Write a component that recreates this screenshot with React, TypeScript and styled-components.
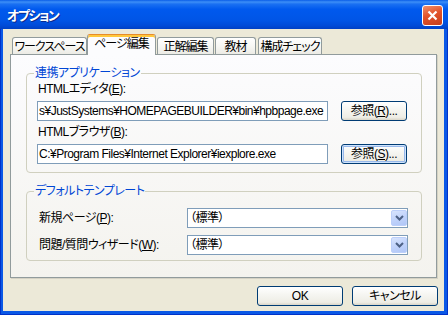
import React from 'react';
import styled, { createGlobalStyle, css } from 'styled-components';

const GlobalStyle = createGlobalStyle`
  html, body {
    margin: 0;
    padding: 0;
    background: #fff;
  }
  body {
    font-family: "Liberation Sans", "Noto Sans CJK JP", sans-serif;
    font-size: 12px;
    font-feature-settings: "palt";
    letter-spacing: -0.5px;
    color: #000;
  }
`;

const Window = styled.div`
  width: 448px;
  height: 315px;
  display: flex;
  flex-direction: column;
  background: #0a58e6;
  box-shadow: inset 1px 0 #0032c8, inset -1px 0 #0032c8, inset 0 -1px #0032c8;
`;

const TitleBar = styled.div`
  height: 29px;
  flex-shrink: 0;
  display: flex;
  align-items: center;
  justify-content: space-between;
  padding: 1px 5px 0 7px;
  box-sizing: border-box;
  background: linear-gradient(
    180deg,
    #0a5de8 0%,
    #3d8ff7 7%,
    #1a70f2 14%,
    #0059ee 32%,
    #0055e6 70%,
    #004bd8 88%,
    #0040c4 100%
  );
`;

const Title = styled.span`
  color: #fff;
  font-weight: bold;
  font-size: 13px;
  line-height: 15px;
  letter-spacing: -1.5px;
  text-shadow: 1px 1px 0 #0c2a8c;
`;

const CloseButton = styled.div`
  width: 21px;
  height: 21px;
  box-sizing: border-box;
  border: 1px solid #fff;
  border-radius: 3px;
  background: linear-gradient(160deg, #f0906c 0%, #e2532b 45%, #c63d1a 100%);
  display: flex;
  align-items: center;
  justify-content: center;
`;

const Client = styled.div`
  flex: 1;
  margin: 0 4px 4px 3px;
  background: #ece9d8;
  display: flex;
  flex-direction: column;
  padding: 5px 6px 0 7px;
`;

const TabRow = styled.div`
  height: 20px;
  display: flex;
  align-items: flex-end;
  padding-left: 2px;
  position: relative;
  z-index: 1;
`;

const Tab = styled.div<{ $active?: boolean; $width: number; $gap: number }>`
  width: ${(p) => p.$width}px;
  margin-left: ${(p) => p.$gap}px;
  box-sizing: border-box;
  border: 1px solid #919b9c;
  border-bottom: none;
  border-radius: 3px 3px 0 0;
  display: flex;
  justify-content: center;
  line-height: 14px;
  letter-spacing: -1px;
  white-space: nowrap;
  ${(p) =>
    p.$active
      ? css`
          height: 21px;
          margin-bottom: -1px;
          padding-top: 2px;
          border-top-color: #e68b2c;
          background: #fcfcfe;
          box-shadow: inset 0 2px 0 #ffc83c;
        `
      : css`
          height: 17px;
          padding-top: 2px;
          background: linear-gradient(180deg, #ffffff 0%, #f7f7f4 50%, #ecebe5 100%);
        `}
`;

const Panel = styled.div`
  height: 224px;
  box-sizing: border-box;
  margin-right: 1px;
  border: 1px solid #919b9c;
  background: linear-gradient(180deg, #fcfcfe 0%, #f4f3ee 100%);
  box-shadow: 1px 1px 0 #d5d2c4;
  padding: 11px 14px 16px 15px;
  display: flex;
  flex-direction: column;
`;

const Group = styled.fieldset<{ $gapTop: number; $pad: string }>`
  margin: ${(p) => p.$gapTop}px 0 0 0;
  border: 1px solid #d0d0bf;
  border-radius: 4px;
  padding: ${(p) => p.$pad};
  min-width: 0;
`;

const Legend = styled.legend`
  color: #0046d5;
  padding: 0 1px;
  margin-left: -3px;
  line-height: 14px;
`;

const FieldLabel = styled.div`
  line-height: 15px;
  margin: 0 0 4px 1px;
  white-space: nowrap;
`;

const PathRow = styled.div<{ $last?: boolean }>`
  display: flex;
  gap: 13px;
  margin-bottom: ${(p) => (p.$last ? 0 : 4)}px;
`;

const TextBox = styled.div`
  flex: 1;
  min-width: 0;
  height: 20px;
  box-sizing: border-box;
  border: 1px solid #7f9db9;
  background: #fff;
  padding: 0 1px 0 1px;
  line-height: 18px;
  white-space: nowrap;
  overflow: hidden;
`;

const Button = styled.div<{ $width: number; $default?: boolean }>`
  width: ${(p) => p.$width}px;
  flex-shrink: 0;
  height: 20px;
  box-sizing: border-box;
  border: 1px solid #003c74;
  border-radius: 3px;
  background: linear-gradient(180deg, #ffffff 0%, #f6f6f2 40%, #eeede5 85%, #d9d5c8 100%);
  display: flex;
  align-items: center;
  justify-content: center;
  line-height: 14px;
  white-space: nowrap;
  ${(p) =>
    p.$default &&
    css`
      box-shadow: inset 0 0 0 1px #cee3fc, inset 0 0 0 2px #98b8ea;
    `}
`;

const TemplateGrid = styled.div`
  display: grid;
  grid-template-columns: 150px 221px;
  row-gap: 7px;
  align-items: center;
`;

const GridLabel = styled.div`
  padding-left: 2px;
  line-height: 15px;
  white-space: nowrap;
`;

const Combo = styled.div`
  height: 20px;
  box-sizing: border-box;
  border: 1px solid #7f9db9;
  background: #fff;
  display: flex;
  align-items: center;
  justify-content: space-between;
  padding-left: 2px;
  line-height: 16px;
`;

const DropButton = styled.div`
  width: 16px;
  height: 16px;
  box-sizing: border-box;
  border: 1px solid #bccffa;
  border-radius: 2px;
  background: linear-gradient(160deg, #d8e4fd 0%, #c1d3fb 50%, #b0c6f6 100%);
  display: flex;
  align-items: center;
  justify-content: center;
`;

const Footer = styled.div`
  display: flex;
  justify-content: flex-end;
  gap: 9px;
  margin-top: 8px;
`;

const tabs = [
  { label: 'ワークスペース', width: 75, gap: 0 },
  { label: 'ページ編集', width: 69, gap: 0, active: true },
  { label: '正解編集', width: 57, gap: 1 },
  { label: '教材', width: 41, gap: 1 },
  { label: '構成チェック', width: 64, gap: 2 },
];

const Chevron = () => (
  <svg width="9" height="6" viewBox="0 0 9 6">
    <path d="M1 1 L4.5 4.5 L8 1" fill="none" stroke="#4d6185" strokeWidth="2" />
  </svg>
);

const App = () => {
  return (
    <>
      <GlobalStyle />
      <Window>
        <TitleBar>
          <Title>オプション</Title>
          <CloseButton>
            <svg width="11" height="11" viewBox="0 0 11 11">
              <path d="M1.5 1.5 L9.5 9.5 M9.5 1.5 L1.5 9.5" stroke="#fff" strokeWidth="2.2" />
            </svg>
          </CloseButton>
        </TitleBar>
        <Client>
          <TabRow>
            {tabs.map((t) => (
              <Tab key={t.label} $active={t.active} $width={t.width} $gap={t.gap}>
                {t.label}
              </Tab>
            ))}
          </TabRow>
          <Panel>
            <Group $gapTop={0} $pad="2px 14px 8px 10px">
              <Legend>連携アプリケーション</Legend>
              <FieldLabel>
                HTMLエディタ(<u>E</u>):
              </FieldLabel>
              <PathRow>
                <TextBox>s¥JustSystems¥HOMEPAGEBUILDER¥bin¥hpbpage.exe</TextBox>
                <Button $width={66}>
                  参照(<u>R</u>)...
                </Button>
              </PathRow>
              <FieldLabel>
                HTMLブラウザ(<u>B</u>):
              </FieldLabel>
              <PathRow $last>
                <TextBox>C:¥Program Files¥Internet Explorer¥iexplore.exe</TextBox>
                <Button $width={66} $default>
                  参照(<u>S</u>)...
                </Button>
              </PathRow>
            </Group>
            <Group $gapTop={11} $pad="10px 13px 5px 10px">
              <Legend>デフォルトテンプレート</Legend>
              <TemplateGrid>
                <GridLabel>
                  新規ページ(<u>P</u>):
                </GridLabel>
                <Combo>
                  （標準）
                  <DropButton>
                    <Chevron />
                  </DropButton>
                </Combo>
                <GridLabel>
                  問題/質問ウィザード(<u>W</u>):
                </GridLabel>
                <Combo>
                  （標準）
                  <DropButton>
                    <Chevron />
                  </DropButton>
                </Combo>
              </TemplateGrid>
            </Group>
          </Panel>
          <Footer>
            <Button $width={86}>OK</Button>
            <Button $width={86}>キャンセル</Button>
          </Footer>
        </Client>
      </Window>
    </>
  );
};

export default App;
